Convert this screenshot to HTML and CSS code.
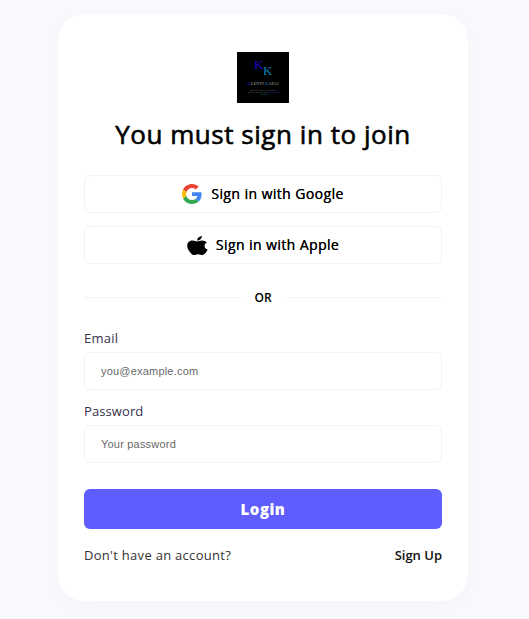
FILE: index.html
```html
<!DOCTYPE html>
<html lang="en">
<head>
<meta charset="utf-8">
<title>Sign in</title>
<link rel="stylesheet" href="styles.css">
</head>
<body>
<main class="card">
  <svg class="logo" viewBox="0 0 52 51" role="img" aria-label="Klenti Kapaj">
    <rect width="52" height="51"/>
    <g class="logo-text">
      <text x="17" y="17" font-size="13" fill="#1c0ac8">K</text>
      <text x="26" y="23" font-size="13" fill="#0880b8">K</text>
      <text x="10.5" y="33" font-size="4.3" textLength="31" fill="#b0b0b0"><tspan fill="#1a10c0">K</tspan>LENTI <tspan fill="#087da5">K</tspan>APAJ</text>
    </g>
    <path d="M13 38.5H39M11 40.5H30" stroke="#3a3a3a" stroke-width=".8" stroke-dasharray="2 .6"/>
    <path d="M30 40.5H42" stroke="#10105c" stroke-width=".8"/>
    <path d="M23 42.3H31" stroke="#083f50" stroke-width=".7"/>
  </svg>
  <h1 class="title">You must sign in to join</h1>
  <button class="provider google">
    <svg class="google-icon" viewBox="0 0 48 48" aria-hidden="true">
      <path fill="#EA4335" d="M24 9.5c3.54 0 6.71 1.22 9.21 3.6l6.85-6.85C35.9 2.38 30.47 0 24 0 14.62 0 6.51 5.38 2.56 13.22l7.98 6.19C12.43 13.72 17.74 9.5 24 9.5z"/>
      <path fill="#4285F4" d="M46.98 24.55c0-1.57-.15-3.09-.38-4.55H24v9.02h12.94c-.58 2.96-2.26 5.48-4.78 7.18l7.73 6c4.51-4.18 7.09-10.36 7.09-17.65z"/>
      <path fill="#FBBC05" d="M10.53 28.59c-.48-1.45-.76-2.99-.76-4.59s.27-3.14.76-4.59l-7.98-6.19C.92 16.46 0 20.12 0 24c0 3.88.92 7.54 2.56 10.78l7.97-6.19z"/>
      <path fill="#34A853" d="M24 48c6.48 0 11.93-2.13 15.89-5.81l-7.73-6c-2.15 1.45-4.92 2.3-8.16 2.3-6.26 0-11.57-4.22-13.47-9.91l-7.98 6.19C6.51 42.62 14.62 48 24 48z"/>
    </svg>
    <span>Sign in with Google</span>
  </button>
  <button class="provider apple">
    <svg class="apple-icon" viewBox="0 0 20 19" preserveAspectRatio="none" aria-hidden="true">
      <path d="M14.2 0c.2 2.2-2 4.7-4.5 4.5C9.500 2.200 11.800.2 14.200 0zM18.900 6.500c-1.500.9-2.200 2-2.200 3.400 0 1.800 1.200 3 3 3.600-.5 1.300-1.200 2.500-2.100 3.600-.8 1-1.700 1.900-3 1.900-1.400 0-1.900-.8-3.900-.8s-2.600.8-3.900.8c-1.400 0-2.400-1-3.300-2.100C1.600 14.900.2 12.300.2 9.800c0-3.300 2.500-5.200 5.100-5.200 1.800 0 3 .9 4.300.9 1.200 0 2.700-1 4.800-1 1.900 0 3.500.7 4.500 2z"/>
    </svg>
    <span>Sign in with Apple</span>
  </button>
  <div class="divider"><span>OR</span></div>
  <form class="form">
    <label class="label email" for="email">Email</label>
    <input class="input" id="email" type="email" placeholder="you@example.com">
    <label class="label password" for="password">Password</label>
    <input class="input" id="password" type="password" placeholder="Your password">
    <button class="login" type="submit">Login</button>
  </form>
  <div class="footer">
    <span class="question">Don't have an account?</span>
    <a class="signup">Sign Up</a>
  </div>
</main>
</body>
</html>
```
FILE: styles.css
```css
* { box-sizing: border-box; }
body {
  margin: 0;
  padding: 14px 61px 18px 58px;
  background: #f7f9fd;
  font-family: "Open Sans", sans-serif;
  color: #000;
}
.card {
  display: flex;
  flex-direction: column;
  width: 410px;
  height: 587px;
  padding: 38px 26px 0;
  border-radius: 26px;
  background: #fff;
  box-shadow: 0 4px 16px rgba(50, 60, 100, .025);
}
.logo { display: block; width: 52px; height: 51px; align-self: center; }
.logo-text { font-family: "Liberation Serif", serif; }
.title {
  margin: 13px 0 0;
  height: 37px;
  font-size: 26px;
  line-height: 36px;
  font-weight: 500;
  text-align: center;
  white-space: nowrap;
  letter-spacing: .54px;
  -webkit-text-stroke: .6px #000;
}
.provider {
  display: flex;
  align-items: center;
  justify-content: center;
  height: 38px;
  padding: 0;
  border: 1px solid #f3f3f3;
  border-radius: 6px;
  background: #fff;
  font: 500 14px/20px "Open Sans", sans-serif;
  letter-spacing: .42px;
  color: #000;
  text-shadow: .2px 0 0 #000;
}
.google { margin-top: 22px; gap: 9px; }
.apple { margin-top: 13px; gap: 8px; }
.google-icon { width: 20px; height: 20px; }
.apple-icon { width: 21px; height: 19px; }
.divider {
  display: flex;
  align-items: center;
  gap: 13px;
  height: 20px;
  margin-top: 23px;
  font-size: 12px;
  font-weight: 600;
}
.divider::before, .divider::after {
  content: "";
  flex: 1;
  height: 1px;
  background: #f3f3f3;
}
.form { display: flex; flex-direction: column; }
.label {
  height: 18px;
  font-size: 13px;
  line-height: 18px;
  letter-spacing: .25px;
  color: #35314b;
}
.email { margin-top: 22px; }
.password { margin-top: 12px; letter-spacing: .1px; }
.input {
  width: 100%;
  height: 38px;
  margin-top: 5px;
  padding: 0 16px;
  border: 1px solid #f3f3f3;
  border-radius: 6px;
  font: 11px "Liberation Sans", sans-serif;
  letter-spacing: .2px;
}
.input::placeholder { color: #696969; }
.login {
  height: 40px;
  margin-top: 26px;
  padding: 0;
  border: 0;
  border-radius: 6px;
  background: #605dff;
  color: #fff;
  font: 800 15px "Open Sans", sans-serif;
  letter-spacing: .5px;
}
.footer {
  display: flex;
  justify-content: space-between;
  margin-top: 16px;
  font-size: 13px;
  line-height: 20px;
}
.question { color: #333; letter-spacing: .29px; }
.signup { font-weight: 600; color: #111; }
```
